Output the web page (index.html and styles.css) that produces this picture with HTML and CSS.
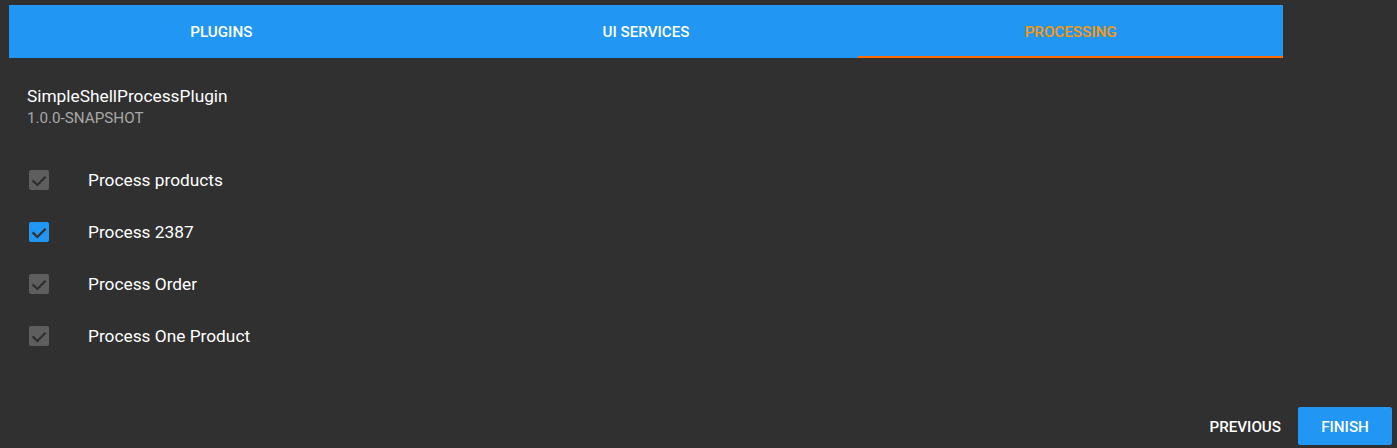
FILE: index.html
```html
<!DOCTYPE html>
<html>
<head>
<meta charset="utf-8">
<link rel="stylesheet" href="styles.css">
</head>
<body>
<div class="page">
  <nav class="tabs">
    <div class="tab">Plugins</div>
    <div class="tab">UI Services</div>
    <div class="tab active">Processing</div>
  </nav>
  <main class="content">
    <div class="plugin-name">SimpleShellProcessPlugin</div>
    <div class="plugin-version">1.0.0-SNAPSHOT</div>
    <ul class="list">
      <li class="row">
        <span class="box disabled"><svg viewBox="0 0 20 20" width="20" height="20"><polyline points="3.6,10.4 8.4,15 16.6,6.8" /></svg></span>
        <span class="label">Process products</span>
      </li>
      <li class="row">
        <span class="box checked"><svg viewBox="0 0 20 20" width="20" height="20"><polyline points="3.6,10.4 8.4,15 16.6,6.8" /></svg></span>
        <span class="label">Process 2387</span>
      </li>
      <li class="row">
        <span class="box disabled"><svg viewBox="0 0 20 20" width="20" height="20"><polyline points="3.6,10.4 8.4,15 16.6,6.8" /></svg></span>
        <span class="label">Process Order</span>
      </li>
      <li class="row">
        <span class="box disabled"><svg viewBox="0 0 20 20" width="20" height="20"><polyline points="3.6,10.4 8.4,15 16.6,6.8" /></svg></span>
        <span class="label">Process One Product</span>
      </li>
    </ul>
  </main>
  <footer class="actions">
    <button class="btn text">Previous</button>
    <button class="btn primary">Finish</button>
  </footer>
</div>
</body>
</html>
```
FILE: styles.css
```css
* { box-sizing: border-box; }
html, body {
  margin: 0;
  padding: 0;
  background: #303030;
  font-family: Roboto, "Liberation Sans", sans-serif;
  color: #fff;
}
.page {
  height: 448px;
  display: flex;
  flex-direction: column;
  padding-top: 5px;
}
.tabs {
  margin-left: 9px;
  width: 1274px;
  height: 53px;
  background: #2196f3;
  display: flex;
}
.tab {
  flex: 1;
  display: flex;
  align-items: center;
  justify-content: center;
  font-size: 15.2px;
  font-weight: 500;
  text-transform: uppercase;
  color: #fff;
  border-bottom: 2px solid transparent;
  padding-top: 2px;
}
.tab.active {
  color: #ff9800;
  border-bottom-color: #ff6d00;
}
.content {
  padding: 28px 0 0 27px;
}
.plugin-name {
  font-size: 17.3px;
  line-height: 20px;
}
.plugin-version {
  font-size: 15.2px;
  line-height: 20px;
  margin-top: 2px;
  color: #a8a8a8;
}
.list {
  list-style: none;
  margin: 26px 0 0 0;
  padding: 0;
}
.row {
  height: 52px;
  display: flex;
  align-items: center;
}
.box {
  width: 20px;
  height: 20px;
  border-radius: 2px;
  margin-left: 2px;
  display: flex;
}
.box svg polyline {
  fill: none;
  stroke: #303030;
  stroke-width: 2.3;
}
.box.disabled { background: #5e5e5e; }
.box.checked { background: #2196f3; }
.label {
  margin-left: 39px;
  font-size: 17.3px;
}
.actions {
  margin-top: auto;
  display: flex;
  justify-content: flex-end;
  align-items: center;
  padding: 0 5px 3px 0;
  gap: 1px;
}
.btn {
  height: 38px;
  border: none;
  border-radius: 2px;
  font-family: inherit;
  font-size: 15.2px;
  font-weight: 500;
  text-transform: uppercase;
  color: #fff;
  padding-top: 2px;
  cursor: pointer;
}
.btn.text {
  background: transparent;
  padding-left: 16px;
  padding-right: 16px;
}
.btn.primary {
  background: #2196f3;
  width: 94px;
}
```
